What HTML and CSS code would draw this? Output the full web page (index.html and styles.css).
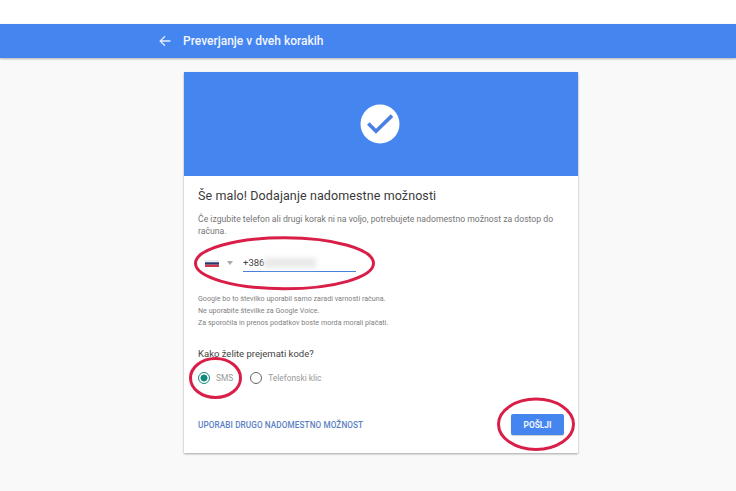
FILE: index.html
```html
<!DOCTYPE html>
<html lang="sl">
<head>
<meta charset="utf-8">
<title>Preverjanje v dveh korakih</title>
<link rel="stylesheet" href="styles.css">
</head>
<body>
<div class="top-gap"></div>
<header class="appbar">
  <svg class="back" width="12" height="12" viewBox="0 0 12 12"><path d="M11.5 6H1.5M6 1.200L1.200 6 6 10.800" fill="none" stroke="#e4edfd" stroke-width="1.300"/></svg>
  <h1 class="appbar-title">Preverjanje v dveh korakih</h1>
</header>
<main class="card">
  <div class="hero">
    <svg class="badge" width="40" height="40" viewBox="0 0 40 40"><circle cx="20" cy="20" r="19.500" fill="#fff"/><path d="M8.300 19.500L16 27.200 32 11.600" fill="none" stroke="#4a80e4" stroke-width="3.600"/></svg>
  </div>
  <div class="content">
    <h2 class="heading">Še malo! Dodajanje nadomestne možnosti</h2>
    <p class="lead">Če izgubite telefon ali drugi korak ni na voljo, potrebujete nadomestno možnost za dostop do računa.</p>
    <div class="phone-row">
      <svg class="flag" width="14" height="7" viewBox="0 0 14 7"><rect width="14" height="2.300" fill="#e9ecf2"/><rect y="2.300" width="14" height="2.400" fill="#27386f"/><rect y="4.700" width="14" height="2.300" fill="#cf3a4a"/></svg>
      <span class="caret"></span>
      <div class="phone-input"><span>+386</span><span class="blur"></span></div>
    </div>
    <div class="notes">
      <p>Google bo to številko uporabil samo zaradi varnosti računa.</p>
      <p>Ne uporabite številke za Google Voice.</p>
      <p>Za sporočila in prenos podatkov boste morda morali plačati.</p>
    </div>
    <p class="question">Kako želite prejemati kode?</p>
    <div class="radios">
      <span class="radio on"></span><span class="radio-label">SMS</span>
      <span class="radio second"></span><span class="radio-label">Telefonski klic</span>
    </div>
    <div class="actions">
      <span class="link">UPORABI DRUGO NADOMESTNO MOŽNOST</span>
      <span class="send">POŠLJI</span>
    </div>
  </div>
</main>
<svg class="marks" width="736" height="491" viewBox="0 0 736 491">
  <g fill="none" stroke="#d91f48" stroke-width="3">
    <ellipse cx="284.500" cy="263.300" rx="89" ry="25.500"/>
    <ellipse cx="215.500" cy="378" rx="25" ry="19.500"/>
    <ellipse cx="536" cy="424.300" rx="37.500" ry="25.200"/>
  </g>
</svg>
</body>
</html>
```
FILE: styles.css
```css
* { box-sizing: border-box; }
html, body { margin: 0; padding: 0; }
body {
  width: 736px;
  height: 491px;
  overflow: hidden;
  position: relative;
  background: #f9f9f9;
  font-family: Roboto, "Liberation Sans", sans-serif;
  color: #757575;
}
p, h1, h2 { margin: 0; font-weight: 400; }
.top-gap { height: 24px; background: #fff; }
.appbar {
  height: 34px;
  background: #4485f0;
  box-shadow: 0 1px 2px rgba(0, 0, 0, .3);
  display: flex;
  align-items: center;
  padding-left: 159px;
}
.back { margin-right: 12px; }
.appbar-title { font-size: 12px; font-weight: 500; color: #f2f6fe; }
.card {
  width: 394px;
  height: 381px;
  margin: 14px 0 0 184px;
  background: #fff;
  box-shadow: 0 1px 2px rgba(0, 0, 0, .35);
}
.hero {
  height: 104px;
  background: #4485f0;
  display: flex;
  align-items: center;
  justify-content: center;
}
.badge { margin-right: 2px; }
.content { padding: 11px 14px 0; }
.heading { font-size: 12.500px; line-height: 17px; color: #3a3a3a; letter-spacing: .1px; }
.lead { margin-top: 9px; font-size: 8.660px; line-height: 12px; color: #757575; }
.phone-row { display: flex; align-items: center; margin-top: 17px; height: 18px; }
.flag { margin-left: 7px; }
.caret {
  width: 0; height: 0;
  margin-left: 8px;
  border-left: 3.500px solid transparent;
  border-right: 3.500px solid transparent;
  border-top: 4px solid #a8a8a8;
}
.phone-input {
  width: 113px;
  height: 18px;
  margin-left: 10px;
  border-bottom: 1px solid #4a80d8;
  display: flex;
  align-items: center;
  font-size: 9.500px;
  color: #444;
}
.blur { width: 52px; height: 10px; background: #e9e9e9; filter: blur(2.500px); }
.notes { margin-top: 21px; font-size: 7.150px; line-height: 12px; color: #7f7f7f; }
.question { margin-top: 18px; font-size: 9.500px; line-height: 13px; color: #444; }
.radios { display: flex; align-items: center; margin-top: 11px; height: 14px; }
.radio {
  width: 12px; height: 12px;
  border: 1.300px solid #666;
  border-radius: 50%;
  flex: none;
}
.radio.on {
  border-color: #128a7d;
  background: radial-gradient(circle, #128a7d 0 3.200px, #fff 3.800px);
}
.radio.second { margin-left: 17px; }
.radio-label { margin-left: 6px; font-size: 8.400px; color: #999; }
.actions { display: flex; align-items: center; justify-content: space-between; margin-top: 29px; height: 21px; }
.link { font-size: 8.200px; font-weight: 500; color: #5a7fc4; letter-spacing: .1px; }
.send {
  width: 53px; height: 21px;
  background: #4485f0;
  border-radius: 2px;
  box-shadow: 0 1px 1px rgba(0, 0, 0, .2);
  color: #f2f6fe;
  font-size: 8.400px;
  font-weight: 700;
  display: flex;
  align-items: center;
  justify-content: center;
}
.marks { position: absolute; left: 0; top: 0; pointer-events: none; }
```
